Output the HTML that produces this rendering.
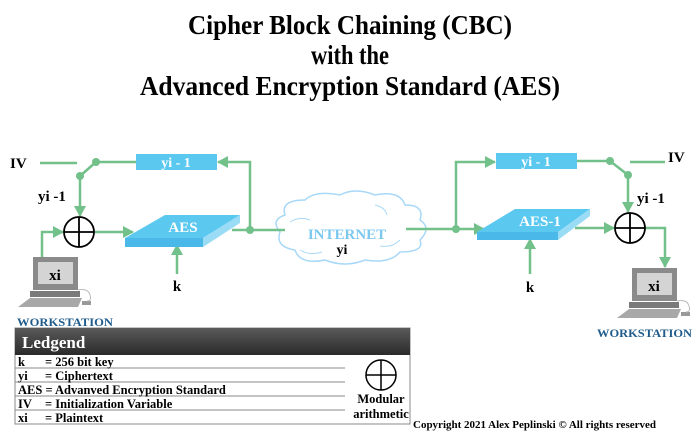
<!DOCTYPE html>
<html><head><meta charset="utf-8"><style>
html,body{margin:0;padding:0;background:#fff;width:700px;height:434px;overflow:hidden}
svg{display:block}
text{font-family:"Liberation Serif",serif;font-weight:bold}
</style></head><body>
<svg width="700" height="434" viewBox="0 0 700 434" xmlns="http://www.w3.org/2000/svg">
<defs>
<marker id="ar" markerWidth="12" markerHeight="12" refX="10" refY="6" orient="auto" markerUnits="userSpaceOnUse"><path d="M0,0 L11,6 L0,12 z" fill="#72c08a"/></marker>
<linearGradient id="hg" x1="0" y1="0" x2="0" y2="1"><stop offset="0" stop-color="#5a5a5a"/><stop offset="1" stop-color="#2a2a2a"/></linearGradient>
<g id="ws">
<rect x="33" y="257" width="45" height="33" fill="#8a8a8a"/>
<rect x="38" y="262" width="35" height="22" fill="#d4d4d4"/>
<rect x="30" y="291" width="50" height="6" fill="#7a7a7a"/>
<path d="M18,307 L30,298 L82,298 L78,307 Z" fill="#a8a8a8"/>
<rect x="82" y="301" width="9" height="4" fill="#999"/>
<path d="M78,290 q10,-2 12,5 q2,6 -3,6" stroke="#bbb" fill="none"/>
<text x="55" y="280" font-size="15" text-anchor="middle">xi</text>
</g>
</defs>
<g fill="#000" text-anchor="middle">
<text x="350" y="34" font-size="27" textLength="324" lengthAdjust="spacingAndGlyphs">Cipher Block Chaining (CBC)</text>
<text x="350" y="64" font-size="27" textLength="78" lengthAdjust="spacingAndGlyphs">with the</text>
<text x="350" y="95" font-size="27" textLength="420" lengthAdjust="spacingAndGlyphs">Advanced Encryption Standard (AES)</text>
</g>
<path d="M285,215 q-5,-15 20,-15 q10,-10 35,-5 q15,-8 35,0 q25,-5 30,10 q20,0 15,15 q12,8 0,20 q5,12 -20,12 q-10,12 -35,8 q-20,8 -40,0 q-25,5 -30,-10 q-20,-3 -15,-18 q-10,-12 5,-17 z" fill="#fff" stroke="#a8d8f8" stroke-width="1.5"/>
<path d="M290,222 q10,-6 20,-2 M375,205 q10,2 12,10 M400,240 q-8,8 -20,6 M300,250 q10,6 22,2" stroke="#a8d8f8" fill="none"/>
<g stroke="#72c08a" stroke-width="2.5" fill="none">
<line x1="40" y1="163" x2="77" y2="163"/>
<line x1="96" y1="162" x2="80" y2="176"/>
<line x1="96" y1="162" x2="136" y2="162"/>
<path d="M250,230 V162 H218" marker-end="url(#ar)"/>
<path d="M80,176 V216" marker-end="url(#ar)"/>
<path d="M42,257 V232 H63" marker-end="url(#ar)"/>
<path d="M94,232 H133" marker-end="url(#ar)"/>
<line x1="232" y1="230" x2="285" y2="230"/>
<path d="M177,274 V245" marker-end="url(#ar)"/>
<line x1="406" y1="229" x2="456" y2="229"/>
<path d="M456,229 H484" marker-end="url(#ar)"/>
<path d="M456,229 V162 H495" marker-end="url(#ar)"/>
<line x1="577" y1="161" x2="610" y2="161"/>
<line x1="610" y1="161" x2="628" y2="175"/>
<line x1="630" y1="162" x2="665" y2="162"/>
<path d="M628,175 V212" marker-end="url(#ar)"/>
<path d="M575,228 H614" marker-end="url(#ar)"/>
<path d="M645,228 H665 V267" marker-end="url(#ar)"/>
<path d="M530,274 V239" marker-end="url(#ar)"/>
</g>
<g fill="#72c08a">
<circle cx="96" cy="162" r="4"/><circle cx="80" cy="176" r="4"/><circle cx="250" cy="230" r="4"/>
<circle cx="456" cy="229" r="4"/><circle cx="610" cy="161" r="4"/><circle cx="628" cy="175" r="4"/>
</g>
<rect x="136" y="154" width="81" height="16" fill="#5bc8f0"/>
<rect x="496" y="153" width="81" height="16" fill="#5bc8f0"/>
<text x="176" y="167" font-size="14" fill="#fff" text-anchor="middle">yi - 1</text>
<text x="536" y="166" font-size="14" fill="#fff" text-anchor="middle">yi - 1</text>
<path d="M125,238 L165,215 L240,215 L203,238 Z" fill="#5bc8f0"/>
<path d="M125,238 H203 V247 H125 Z" fill="#4ab8e8"/>
<path d="M203,238 L240,215 L240,223 L203,247 Z" fill="#9adcf6"/>
<text x="183" y="232" font-size="15" fill="#fff" text-anchor="middle">AES</text>
<path d="M477,232 L515,209 L590,209 L558,232 Z" fill="#5bc8f0"/>
<path d="M477,232 H558 V240 H477 Z" fill="#4ab8e8"/>
<path d="M558,232 L590,209 L590,216 L558,240 Z" fill="#9adcf6"/>
<text x="540" y="226" font-size="15" fill="#fff" text-anchor="middle">AES-1</text>
<g stroke="#000" stroke-width="1.8" fill="#fff">
<circle cx="79" cy="232" r="15"/><path d="M64,232 H94 M79,217 V247"/>
<circle cx="630" cy="228" r="15"/><path d="M615,228 H645 M630,213 V243"/>
</g>
<text x="347" y="239" font-size="15" fill="#7cc8ef" text-anchor="middle">INTERNET</text>
<text x="342" y="254" font-size="14" text-anchor="middle">yi</text>
<text x="10" y="168" font-size="15">IV</text>
<text x="668" y="162" font-size="15">IV</text>
<text x="38" y="201" font-size="15">yi -1</text>
<text x="637" y="203" font-size="15">yi -1</text>
<text x="177" y="291" font-size="15" text-anchor="middle">k</text>
<text x="530" y="292" font-size="15" text-anchor="middle">k</text>
<use href="#ws"/>
<use href="#ws" transform="translate(599,11)"/>
<text x="17" y="326" font-size="11.5" fill="#1f5c8c" textLength="96" lengthAdjust="spacingAndGlyphs">WORKSTATION</text>
<text x="597" y="337" font-size="11.5" fill="#1f5c8c" textLength="95" lengthAdjust="spacingAndGlyphs">WORKSTATION</text>
<rect x="15" y="328" width="395" height="96" fill="#fff" stroke="#888"/>
<rect x="15" y="328" width="395" height="27" fill="url(#hg)"/>
<text x="22" y="348" font-size="17" fill="#fff">Ledgend</text>
<g stroke="#888"><line x1="15" y1="368" x2="345" y2="368"/><line x1="15" y1="382" x2="345" y2="382"/><line x1="15" y1="396" x2="345" y2="396"/><line x1="15" y1="410" x2="345" y2="410"/></g>
<g font-size="12.5">
<text x="18" y="366">k</text><text x="45" y="366">= 256 bit key</text>
<text x="18" y="380">yi</text><text x="45" y="380">= Ciphertext</text>
<text x="18" y="394">AES = Advanved Encryption Standard</text>
<text x="18" y="408">IV</text><text x="45" y="408">= Initialization Variable</text>
<text x="18" y="422">xi</text><text x="45" y="422">= Plaintext</text>
</g>
<g stroke="#000" stroke-width="1.5" fill="none"><circle cx="381" cy="375" r="15"/><path d="M366,375 H396 M381,360 V390"/></g>
<text x="381" y="403" font-size="12.5" text-anchor="middle">Modular</text>
<text x="381" y="418" font-size="12.5" text-anchor="middle">arithmetic</text>
<text x="413" y="428" font-size="11">Copyright 2021 Alex Peplinski © All rights reserved</text>
</svg>
</body></html>
